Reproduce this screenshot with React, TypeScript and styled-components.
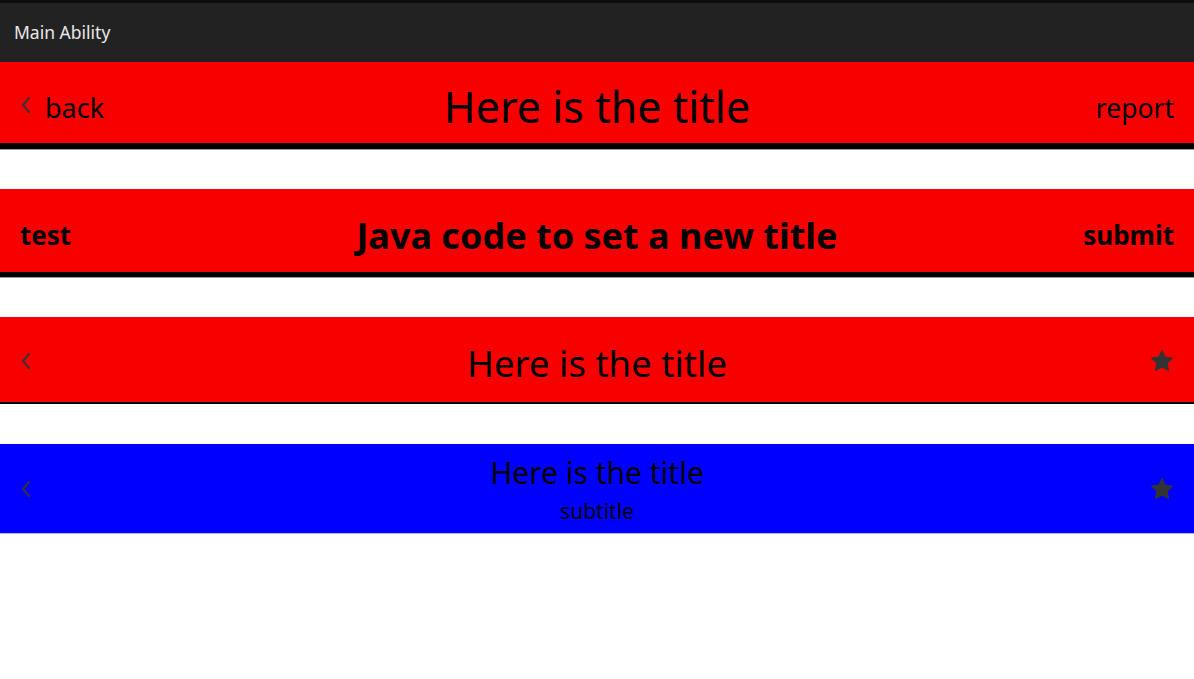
import React from 'react';
import styled, { createGlobalStyle } from 'styled-components';

const GlobalStyle = createGlobalStyle`
  html, body {
    margin: 0;
    padding: 0;
    background: #ffffff;
    font-family: "Noto Sans", "Open Sans", sans-serif;
  }
  * { box-sizing: border-box; }
`;

const Page = styled.div`
  width: 1194px;
  min-height: 679px;
  background: #ffffff;
  display: flex;
  flex-direction: column;
`;

const AppBar = styled.header`
  height: 62px;
  border-top: 3px solid #0c0c0c;
  background: #222222;
  display: flex;
  align-items: center;
  padding: 0 14px 2px;
  color: #e8e8e8;
  font-size: 17.5px;
`;

const Stack = styled.div`
  display: flex;
  flex-direction: column;
  gap: 39px;
`;

const Bar = styled.div<{ $bg: string; $h: number; $shadow: number; $line: string }>`
  height: ${({ $h }) => $h}px;
  background: ${({ $bg }) => $bg};
  box-shadow: inset 0 -${({ $shadow }) => $shadow}px 0 #000;
  border-bottom: 1px solid ${({ $line }) => $line};
  display: grid;
  grid-template-columns: 1fr auto 1fr;
  align-items: center;
  padding: 0 20px;
  color: #000;
`;

const Side = styled.div<{ $right?: boolean; $bold?: boolean; $size: number }>`
  display: flex;
  align-items: center;
  justify-content: ${({ $right }) => ($right ? 'flex-end' : 'flex-start')};
  gap: 13px;
  font-size: ${({ $size }) => $size}px;
  font-weight: ${({ $bold }) => ($bold ? 700 : 400)};
`;

const Label = styled.span<{ $pad: number }>`
  padding-top: ${({ $pad }) => $pad}px;
  line-height: 1.2;
`;

const Title = styled.div<{ $size: number; $bold?: boolean; $pad: number }>`
  font-size: ${({ $size }) => $size}px;
  font-weight: ${({ $bold }) => ($bold ? 700 : 400)};
  line-height: 1.1;
  padding-top: ${({ $pad }) => $pad}px;
  text-align: center;
  white-space: nowrap;
  display: flex;
  flex-direction: column;
  align-items: center;
`;

const Subtitle = styled.span`
  font-size: 21px;
  line-height: 1.2;
  margin-top: 10px;
`;

const Chevron = () => (
  <svg width="12" height="18" viewBox="0 0 12 18">
    <path d="M9 2 L3 9 L9 16" fill="none" stroke="#333" strokeWidth="2" strokeLinecap="round" strokeLinejoin="round" />
  </svg>
);

const Star = () => (
  <svg width="24" height="24" viewBox="0 0 24 24">
    <path
      d="M12 1.8 L15.1 8.3 L22.2 9.2 L17 14.1 L18.3 21.2 L12 17.8 L5.7 21.2 L7 14.1 L1.8 9.2 L8.9 8.3 Z"
      fill="#333"
      stroke="#333"
      strokeWidth="1.4"
      strokeLinejoin="round"
    />
  </svg>
);

export default function App() {
  return (
    <>
      <GlobalStyle />
      <Page>
        <AppBar>Main Ability</AppBar>
        <Stack>
          <Bar $bg="#f80000" $h={88} $shadow={6} $line="#9a9a9a">
            <Side $size={27}>
              <Chevron />
              <Label $pad={6}>back</Label>
            </Side>
            <Title $size={43} $pad={3}>
              Here is the title
            </Title>
            <Side $right $size={26.5}>
              <Label $pad={6}>report</Label>
            </Side>
          </Bar>
          <Bar $bg="#f80000" $h={89} $shadow={5} $line="#9a9a9a">
            <Side $size={26} $bold>
              <Label $pad={6}>test</Label>
            </Side>
            <Title $size={36} $bold $pad={6}>
              Java code to set a new title
            </Title>
            <Side $right $size={26} $bold>
              <Label $pad={6}>submit</Label>
            </Side>
          </Bar>
          <Bar $bg="#f80000" $h={88} $shadow={2} $line="#ffffff">
            <Side $size={26}>
              <Chevron />
            </Side>
            <Title $size={36.5} $pad={6}>
              Here is the title
            </Title>
            <Side $right $size={26}>
              <Star />
            </Side>
          </Bar>
          <Bar $bg="#0000ff" $h={90} $shadow={0} $line="#b8b8ee">
            <Side $size={26}>
              <Chevron />
            </Side>
            <Title $size={30} $pad={4}>
              Here is the title
              <Subtitle>subtitle</Subtitle>
            </Title>
            <Side $right $size={26}>
              <Star />
            </Side>
          </Bar>
        </Stack>
      </Page>
    </>
  );
}
